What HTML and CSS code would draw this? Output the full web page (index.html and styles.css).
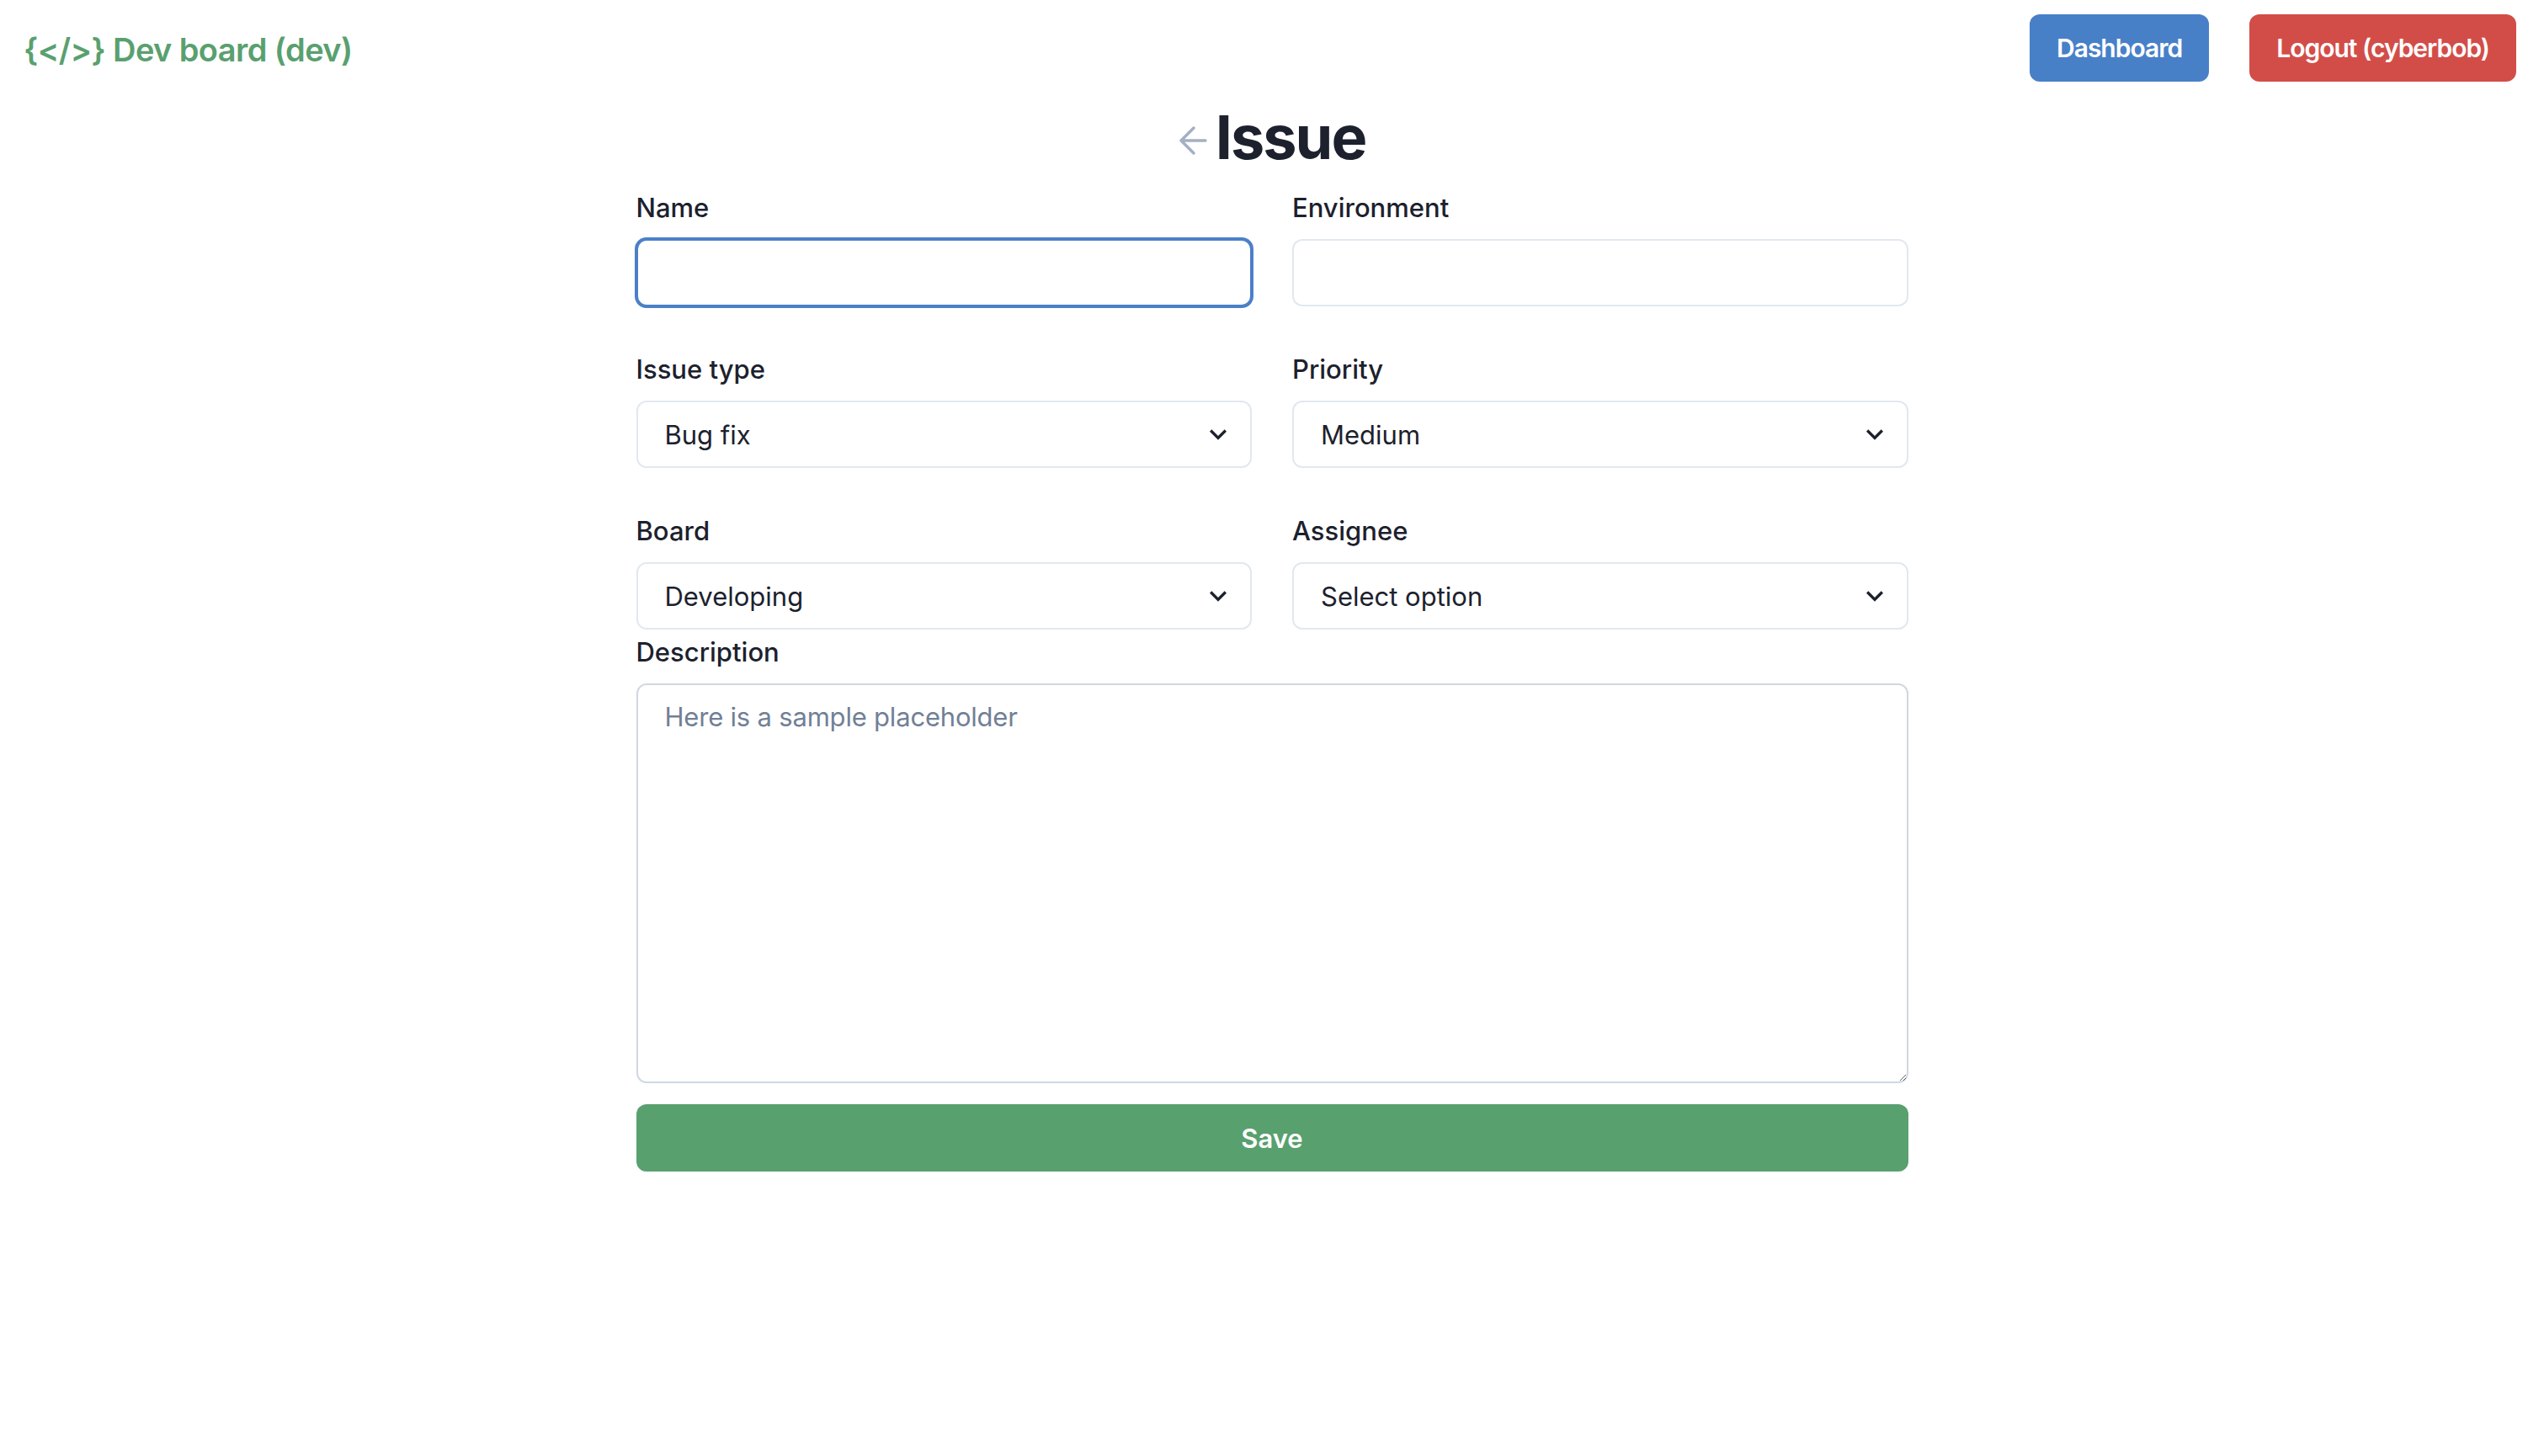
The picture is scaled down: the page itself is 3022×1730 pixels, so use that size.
FILE: index.html
```html
<!DOCTYPE html>
<html lang="en">
<head>
<meta charset="utf-8">
<title>Issue - Dev board</title>
<link rel="stylesheet" href="styles.css">
</head>
<body>
<header class="topbar">
  <a class="logo" href="#">{&lt;/&gt;} Dev board (dev)</a>
  <nav class="actions">
    <button class="btn btn-blue" type="button">Dashboard</button>
    <button class="btn btn-red" type="button">Logout (cyberbob)</button>
  </nav>
</header>
<main class="page">
  <h1 class="title">
    <svg class="back" viewBox="0 0 34 34" width="34" height="34" aria-hidden="true">
      <path d="M32 17H3M18 2L3 17L18 32" fill="none" stroke="currentColor" stroke-width="3.4" stroke-linecap="round" stroke-linejoin="round"/>
    </svg>
    <span>Issue</span>
  </h1>
  <form class="form">
    <div class="grid">
      <div class="field">
        <label class="label" for="name">Name</label>
        <input class="control is-focused" id="name" type="text">
      </div>
      <div class="field">
        <label class="label" for="env">Environment</label>
        <input class="control" id="env" type="text">
      </div>
      <div class="field">
        <label class="label" for="type">Issue type</label>
        <div class="select-wrap">
          <select class="control select" id="type"><option>Bug fix</option></select>
          <svg class="chev" viewBox="0 0 24 24" aria-hidden="true"><path fill="currentColor" d="M16.59 8.59L12 13.17 7.41 8.59 6 10l6 6 6-6z"/></svg>
        </div>
      </div>
      <div class="field">
        <label class="label" for="prio">Priority</label>
        <div class="select-wrap">
          <select class="control select" id="prio"><option>Medium</option></select>
          <svg class="chev" viewBox="0 0 24 24" aria-hidden="true"><path fill="currentColor" d="M16.59 8.59L12 13.17 7.41 8.59 6 10l6 6 6-6z"/></svg>
        </div>
      </div>
      <div class="field">
        <label class="label" for="board">Board</label>
        <div class="select-wrap">
          <select class="control select" id="board"><option>Developing</option></select>
          <svg class="chev" viewBox="0 0 24 24" aria-hidden="true"><path fill="currentColor" d="M16.59 8.59L12 13.17 7.41 8.59 6 10l6 6 6-6z"/></svg>
        </div>
      </div>
      <div class="field">
        <label class="label" for="assignee">Assignee</label>
        <div class="select-wrap">
          <select class="control select" id="assignee"><option>Select option</option></select>
          <svg class="chev" viewBox="0 0 24 24" aria-hidden="true"><path fill="currentColor" d="M16.59 8.59L12 13.17 7.41 8.59 6 10l6 6 6-6z"/></svg>
        </div>
      </div>
    </div>
    <div class="field desc">
      <label class="label" for="desc">Description</label>
      <textarea class="textarea" id="desc" placeholder="Here is a sample placeholder"></textarea>
    </div>
    <button class="save" type="button">Save</button>
  </form>
</main>
</body>
</html>
```
FILE: styles.css
```css
* { box-sizing: border-box; }
html, body { margin: 0; padding: 0; background: #ffffff; }
body {
  font-family: Inter, "Noto Sans", "Liberation Sans", sans-serif;
  color: #1c212d;
  width: 3022px;
  min-height: 1730px;
}

.topbar {
  display: flex;
  justify-content: space-between;
  align-items: center;
  padding: 17px 33px 0 28px;
}
.logo {
  font-size: 38px;
  font-weight: 600;
  letter-spacing: -0.6px;
  color: #59a06f;
  text-decoration: none;
  line-height: 48px;
  margin-top: 4px;
}
.actions { display: flex; gap: 48px; }
.btn {
  height: 80px;
  padding: 0 32px;
  border: 0;
  border-radius: 12px;
  font-family: inherit;
  font-size: 30px;
  font-weight: 600;
  letter-spacing: -1px;
  color: #ffffff;
  cursor: pointer;
}
.btn-blue { background: #4880c8; }
.btn-red { background: #d34d48; }

.page { display: flex; flex-direction: column; align-items: center; }
.title {
  display: flex;
  align-items: center;
  gap: 10px;
  margin: 23px 0 0;
  font-size: 72px;
  font-weight: 700;
  line-height: 86px;
  letter-spacing: -2px;
  color: #1c212d;
}
.back { color: #a3b0c2; width: 34px; height: 34px; margin-top: 8px; }

.form { width: 1511px; margin-top: 17px; }
.grid {
  display: grid;
  grid-template-columns: 1fr 1fr;
  column-gap: 48px;
  row-gap: 51px;
}
.field { display: flex; flex-direction: column; }
.label {
  font-size: 31px;
  font-weight: 500;
  line-height: 48px;
  margin-bottom: 13px;
  color: #1c212d;
}
.control {
  height: 80px;
  width: 100%;
  padding: 0 32px;
  border: 2px solid #e2e8f0;
  border-radius: 12px;
  background: #ffffff;
  font-family: inherit;
  font-size: 31px;
  color: #1c212d;
  outline: none;
}
.control.is-focused {
  border-color: #4a80c8;
  box-shadow: 0 0 0 2px #4a80c8;
}
.select-wrap { position: relative; }
.select {
  appearance: none;
  -webkit-appearance: none;
  padding-right: 80px;
}
.chev {
  position: absolute;
  right: 20px;
  top: 20px;
  width: 40px;
  height: 40px;
  color: #1c212d;
  pointer-events: none;
}

.desc { margin-top: 3px; }
.textarea {
  height: 475px;
  width: 100%;
  padding: 16px 32px;
  border: 2px solid #cfd8e2;
  border-radius: 12px;
  font-family: inherit;
  font-size: 31px;
  line-height: 44px;
  letter-spacing: -0.2px;
  color: #1c212d;
  resize: vertical;
  outline: none;
}
.textarea::placeholder { color: #718096; }

.save {
  display: block;
  width: 100%;
  height: 80px;
  margin-top: 25px;
  border: 0;
  border-radius: 12px;
  background: #59a06f;
  color: #ffffff;
  font-family: inherit;
  font-size: 31px;
  font-weight: 600;
  cursor: pointer;
}
```
